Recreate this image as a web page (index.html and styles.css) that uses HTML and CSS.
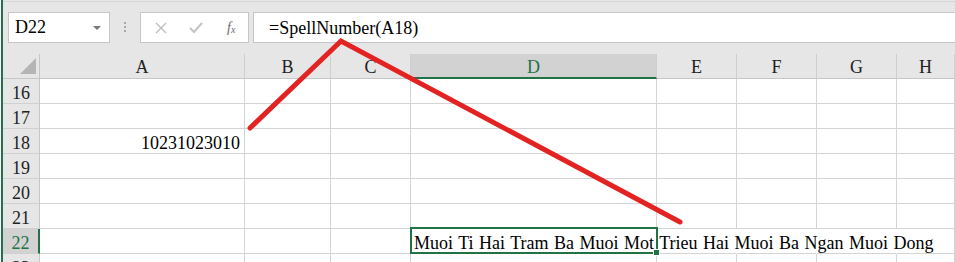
FILE: index.html
```html
<!DOCTYPE html>
<html lang="en">
<head>
  <meta charset="UTF-8">
  <title>SpellNumber</title>
  <link rel="stylesheet" href="styles.css">
</head>
<body>
  <div class="app">
    <div class="toolbar">
      <div class="namebox">
        <span>D22</span>
        <span class="arrow"></span>
      </div>
      <div class="grip"><i></i><i></i><i></i></div>
      <div class="fnbox">
        <svg class="ico" width="12" height="12" viewBox="0 0 12 12">
          <path d="M1 1 L11 11 M11 1 L1 11" stroke="#bdbdbd" stroke-width="1.4" fill="none"/>
        </svg>
        <svg class="ico" width="14" height="12" viewBox="0 0 14 12">
          <path d="M1 6 L5 10 L13 1" stroke="#c4c4c4" stroke-width="2" fill="none"/>
        </svg>
        <span class="fx">f<sub>x</sub></span>
      </div>
      <div class="formula">=SpellNumber(A18)</div>
    </div>

    <div class="sheet">
      <div class="corner"><span></span></div>
      <div class="ch">A</div>
      <div class="ch">B</div>
      <div class="ch">C</div>
      <div class="ch sel">D</div>
      <div class="ch">E</div>
      <div class="ch">F</div>
      <div class="ch">G</div>
      <div class="ch">H</div>

      <div class="rh">16</div>
      <div class="c"></div><div class="c"></div><div class="c"></div><div class="c"></div><div class="c"></div><div class="c"></div><div class="c"></div><div class="c"></div>

      <div class="rh">17</div>
      <div class="c"></div><div class="c"></div><div class="c"></div><div class="c"></div><div class="c"></div><div class="c"></div><div class="c"></div><div class="c"></div>

      <div class="rh">18</div>
      <div class="c num">10231023010</div><div class="c"></div><div class="c"></div><div class="c"></div><div class="c"></div><div class="c"></div><div class="c"></div><div class="c"></div>

      <div class="rh">19</div>
      <div class="c"></div><div class="c"></div><div class="c"></div><div class="c"></div><div class="c"></div><div class="c"></div><div class="c"></div><div class="c"></div>

      <div class="rh">20</div>
      <div class="c"></div><div class="c"></div><div class="c"></div><div class="c"></div><div class="c"></div><div class="c"></div><div class="c"></div><div class="c"></div>

      <div class="rh">21</div>
      <div class="c"></div><div class="c"></div><div class="c"></div><div class="c"></div><div class="c"></div><div class="c"></div><div class="c"></div><div class="c"></div>

      <div class="rh sel">22</div>
      <div class="c"></div><div class="c"></div><div class="c"></div>
      <div class="c active">Muoi Ti Hai Tram Ba Muoi Mot Trieu Hai Muoi Ba Ngan Muoi Dong</div>
      <div class="c spill"></div><div class="c spill"></div><div class="c spill"></div><div class="c"></div>

      <div class="rh">23</div>
      <div class="c"></div><div class="c"></div><div class="c"></div><div class="c"></div><div class="c"></div><div class="c"></div><div class="c"></div><div class="c"></div>
    </div>

    <svg class="marks" width="955" height="262" viewBox="0 0 955 262">
      <polyline points="250,128 341,41 680,222" fill="none" stroke="#e32222" stroke-width="5" stroke-linecap="round" stroke-linejoin="miter"/>
    </svg>
  </div>
</body>
</html>
```

FILE: styles.css
```css
body {
  margin: 0;
  background: #ffffff;
}

.app {
  position: relative;
  width: 952px;
  height: 262px;
  margin-left: 1px;
  border-left: 2px solid #217346;
  overflow: hidden;
  font-family: "Liberation Serif", "Times New Roman", serif;
  font-size: 18px;
  color: #000;
  background: #e6e6e6;
}

/* formula bar */
.toolbar {
  height: 53px;
  box-sizing: border-box;
  padding: 12px 0 0 5px;
  border-top: 1px solid #d6d6d6;
  margin-top: 1px;
  display: flex;
  align-items: flex-start;
}

.namebox {
  width: 102px;
  height: 31px;
  box-sizing: border-box;
  border: 1px solid #c6c6c6;
  background: #fff;
  display: flex;
  align-items: center;
  justify-content: space-between;
  padding: 0 8px 0 6px;
  margin-top: -2px;
}

.arrow {
  width: 0;
  height: 0;
  border-left: 4px solid transparent;
  border-right: 4px solid transparent;
  border-top: 4px solid #777;
}

.grip {
  width: 30px;
  height: 29px;
  margin-top: -2px;
  display: flex;
  flex-direction: column;
  align-items: center;
  justify-content: center;
  gap: 2px;
}

.grip i {
  width: 2px;
  height: 2px;
  background: #a8a8a8;
}

.fnbox {
  width: 109px;
  height: 31px;
  box-sizing: border-box;
  border: 1px solid #c6c6c6;
  background: #fff;
  margin-top: -2px;
  display: flex;
  align-items: center;
  padding-left: 14px;
  gap: 22px;
}

.fx {
  font-style: italic;
  font-size: 14px;
  color: #6a6a6a;
  margin-left: 2px;
}

.fx sub {
  font-size: 10px;
  vertical-align: -1px;
}

.formula {
  flex: 1;
  height: 31px;
  box-sizing: border-box;
  border: 1px solid #c6c6c6;
  border-right: none;
  background: #fff;
  margin-left: 4px;
  margin-top: -2px;
  padding: 5px 0 0 15px;
  line-height: 20px;
}

/* grid */
.sheet {
  display: grid;
  grid-template-columns: 37px 205px 86px 80px 246px 80px 80px 80px 1fr;
  grid-auto-rows: 25px;
  background: #fff;
}

.corner,
.ch,
.rh {
  background: #e6e6e6;
  color: #222;
  box-sizing: border-box;
}

.corner {
  border-right: 1px solid #c6c6c6;
  border-bottom: 1px solid #c6c6c6;
  position: relative;
}

.corner span {
  position: absolute;
  right: 3px;
  bottom: 4px;
  width: 0;
  height: 0;
  border-left: 16px solid transparent;
  border-bottom: 16px solid #b5b5b5;
}

.ch {
  text-align: center;
  line-height: 20px;
  padding-top: 3px;
  border-right: 1px solid #cfcfcf;
  border-bottom: 1px solid #c6c6c6;
}

.ch.sel {
  background: #d2d2d2;
  color: #217346;
  border-bottom: 2px solid #217346;
}

.rh {
  text-align: center;
  line-height: 20px;
  padding-top: 4px;
  border-right: 1px solid #c6c6c6;
  border-bottom: 1px solid #d0d0d0;
}

.rh.sel {
  background: #d2d2d2;
  color: #217346;
  border-right: 2px solid #217346;
}

.c {
  box-sizing: border-box;
  border-right: 1px solid #d4d4d4;
  border-bottom: 1px solid #d4d4d4;
  line-height: 20px;
  padding-top: 4px;
  white-space: nowrap;
}

.c.num {
  text-align: right;
  padding-right: 4px;
}

.c.spill {
  border-right-color: transparent;
}

.c.active {
  position: relative;
  z-index: 1;
  overflow: visible;
  padding-left: 3px;
  word-spacing: 1px;
}

.c.active::after {
  content: "";
  position: absolute;
  left: -1px;
  top: -2px;
  right: -2px;
  bottom: -1px;
  border: 2px solid #217346;
}

.c.active::before {
  content: "";
  position: absolute;
  right: -4px;
  bottom: -3px;
  width: 5px;
  height: 5px;
  background: #217346;
  border: 1px solid #fff;
  z-index: 2;
}

.marks {
  position: absolute;
  top: 0;
  left: -3px;
  pointer-events: none;
}
```
